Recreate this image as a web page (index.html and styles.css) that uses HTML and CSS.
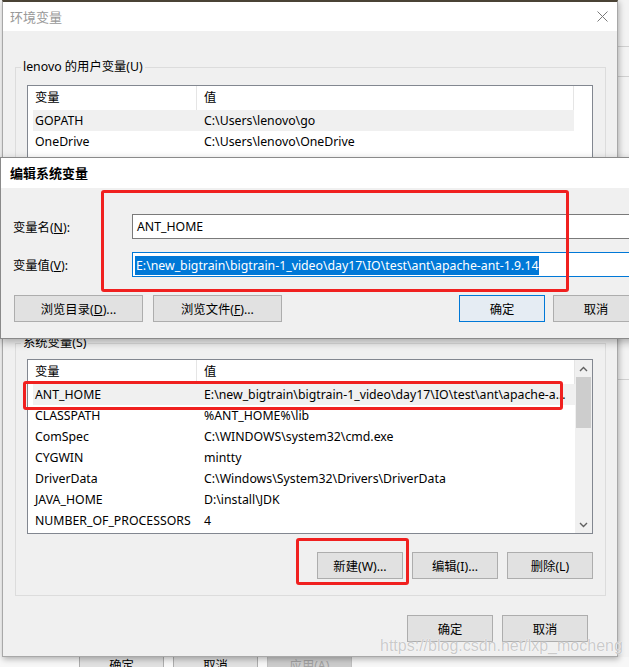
FILE: index.html
```html
<!DOCTYPE html>
<html lang="zh-CN">
  <head>
    <meta charset="UTF-8" />
    <title>环境变量</title>
    <link rel="stylesheet" href="styles.css">
  </head>
  <body>
    <div class="screen">
      <div class="top_row">
        <div class="env_dialog">
          <div class="env_title">
            <span>环境变量</span>
            <svg class="close_icon" width="11" height="11" viewBox="0 0 11 11">
              <path d="M0.5 0.5 L10.5 10.5 M10.5 0.5 L0.5 10.5" stroke="#7a7a7a" stroke-width="1" fill="none" />
            </svg>
          </div>
          <div class="env_body">
            <fieldset class="group group_user">
              <legend>lenovo 的用户变量(U)</legend>
              <div class="list list_user">
                <div class="list_body">
                  <div class="list_head">
                    <span class="col_name">变量</span>
                    <span class="col_value">值</span>
                  </div>
                  <div class="row selected">
                    <span class="col_name">GOPATH</span>
                    <span class="col_value">C:\Users\lenovo\go</span>
                  </div>
                  <div class="row">
                    <span class="col_name">OneDrive</span>
                    <span class="col_value">C:\Users\lenovo\OneDrive</span>
                  </div>
                </div>
                <div class="scroll_blank"></div>
              </div>
              <div class="group_buttons">
                <button class="btn">新建(N)...</button>
                <button class="btn">编辑(E)...</button>
                <button class="btn">删除(D)</button>
              </div>
            </fieldset>

            <fieldset class="group group_system">
              <legend>系统变量(S)</legend>
              <div class="list list_system">
                <div class="list_body">
                  <div class="list_head">
                    <span class="col_name">变量</span>
                    <span class="col_value">值</span>
                  </div>
                  <div class="row selected">
                    <span class="col_name">ANT_HOME</span>
                    <span class="col_value">E:\new_bigtrain\bigtrain-1_video\day17\IO\test\ant\apache-a...</span>
                  </div>
                  <div class="row">
                    <span class="col_name">CLASSPATH</span>
                    <span class="col_value">%ANT_HOME%\lib</span>
                  </div>
                  <div class="row">
                    <span class="col_name">ComSpec</span>
                    <span class="col_value">C:\WINDOWS\system32\cmd.exe</span>
                  </div>
                  <div class="row">
                    <span class="col_name">CYGWIN</span>
                    <span class="col_value">mintty</span>
                  </div>
                  <div class="row">
                    <span class="col_name">DriverData</span>
                    <span class="col_value">C:\Windows\System32\Drivers\DriverData</span>
                  </div>
                  <div class="row">
                    <span class="col_name">JAVA_HOME</span>
                    <span class="col_value">D:\install\JDK</span>
                  </div>
                  <div class="row">
                    <span class="col_name">NUMBER_OF_PROCESSORS</span>
                    <span class="col_value">4</span>
                  </div>
                </div>
                <div class="scrollbar">
                  <div class="scroll_arrow">
                    <svg width="9" height="6" viewBox="0 0 9 6"><path d="M1 5 L4.5 1.5 L8 5" stroke="#606060" stroke-width="1.4" fill="none" /></svg>
                  </div>
                  <div class="scroll_track">
                    <div class="scroll_thumb"></div>
                  </div>
                  <div class="scroll_arrow">
                    <svg width="9" height="6" viewBox="0 0 9 6"><path d="M1 1 L4.5 4.5 L8 1" stroke="#606060" stroke-width="1.4" fill="none" /></svg>
                  </div>
                </div>
              </div>
              <div class="group_buttons">
                <button class="btn">新建(W)...</button>
                <button class="btn">编辑(I)...</button>
                <button class="btn">删除(L)</button>
              </div>
            </fieldset>

            <div class="footer_buttons">
              <button class="btn">确定</button>
              <button class="btn">取消</button>
            </div>
          </div>
        </div>
        <div class="behind_right">
          <div class="strip_line line_a"></div>
          <div class="strip_line line_b"></div>
          <div class="strip_line line_c"></div>
        </div>
      </div>

      <div class="behind_bottom">
        <button class="btn">确定</button>
        <button class="btn">取消</button>
        <button class="btn disabled">应用(A)</button>
      </div>

      <!-- 编辑系统变量 (弹窗) -->
      <div class="edit_dialog">
        <div class="edit_title">编辑系统变量</div>
        <div class="edit_body">
          <div class="field_row">
            <label class="field_label">变量名(<u>N</u>):</label>
            <div class="field_input">ANT_HOME</div>
          </div>
          <div class="field_row">
            <label class="field_label">变量值(<u>V</u>):</label>
            <div class="field_input focused"><span class="selection">E:\new_bigtrain\bigtrain-1_video\day17\IO\test\ant\apache-ant-1.9.14</span></div>
          </div>
          <div class="edit_buttons">
            <button class="btn wide">浏览目录(<u>D</u>)...</button>
            <button class="btn wide">浏览文件(<u>F</u>)...</button>
            <button class="btn default">确定</button>
            <button class="btn">取消</button>
          </div>
        </div>
      </div>

      <!-- 红框标注 -->
      <div class="mark mark_edit"></div>
      <div class="mark mark_row"></div>
      <div class="mark mark_new"></div>

      <div class="watermark">https://blog.csdn.net/lxp_mocheng</div>
    </div>
  </body>
</html>
```

FILE: styles.css
```css
* {
  box-sizing: border-box;
}
body {
  margin: 0;
  font-family: "Noto Sans", "Noto Sans CJK SC", sans-serif;
  font-size: 12.3px;
  color: #000;
}
.screen {
  position: relative;
  width: 629px;
  height: 667px;
  overflow: hidden;
  background: #f7f7f7;
}
.top_row {
  display: flex;
}

/* 环境变量 窗口 */
.env_dialog {
  position: relative;
  z-index: 1;
  width: 616px;
  height: 657px;
  margin-left: 2px;
  border-top: 2px solid #4a4335;
  border-left: 1px solid #a8a8a8;
  border-right: 1px solid #a8a8a8;
  border-bottom: 1px solid #a8a8a8;
  background: #f0f0f0;
  box-shadow: 1px 2px 6px rgba(0, 0, 0, 0.3);
  display: flex;
  flex-direction: column;
}
.env_title {
  height: 29px;
  background: #fff;
  color: #999;
  font-size: 13px;
  display: flex;
  align-items: center;
  justify-content: space-between;
  padding: 0 9px 0 7px;
}
.group {
  margin: 28px 11px 0 12px;
  padding: 0 12px 16px 11px;
  border: 1px solid #dcdcdc;
  min-width: 0;
}
.group legend {
  margin-left: -6px;
  padding: 0 2px;
  line-height: 16px;
}
.group_system {
  margin-top: 24px;
}
.list {
  margin-top: 10px;
  display: flex;
  background: #fff;
  border: 1px solid #828790;
}
.list_user {
  height: 164px;
}
.list_system {
  height: 175px;
  margin-top: 8px;
}
.list_body {
  flex: 1;
  overflow: hidden;
}
.list_head {
  display: flex;
  height: 24px;
  line-height: 24px;
}
.list_head span {
  padding-left: 7px;
  border-right: 1px solid #e5e5e5;
}
.list_head .col_name {
  width: 169px;
}
.list_head .col_value {
  flex: 1;
}
.row {
  display: flex;
  height: 21px;
  line-height: 21px;
  margin-left: 5px;
  white-space: nowrap;
}
.row .col_name {
  width: 164px;
  padding-left: 2px;
  flex-shrink: 0;
}
.row .col_value {
  padding-left: 7px;
}
.row.selected {
  background: #f0f0f0;
}
.scroll_blank {
  width: 18px;
}
.scrollbar {
  width: 17px;
  background: #f0f0f0;
  display: flex;
  flex-direction: column;
}
.scroll_arrow {
  height: 17px;
  display: flex;
  align-items: center;
  justify-content: center;
}
.scroll_track {
  flex: 1;
}
.scroll_thumb {
  height: 51px;
  margin: 0 1px;
  background: #cdcdcd;
}
.group_buttons {
  margin-top: 18px;
  display: flex;
  justify-content: flex-end;
  gap: 9px;
}
.btn {
  width: 86px;
  height: 27px;
  padding: 0;
  border: 1px solid #adadad;
  background: #e1e1e1;
  font: inherit;
  color: #000;
}
.footer_buttons {
  margin: 19px 29px 0 0;
  display: flex;
  justify-content: flex-end;
  gap: 9px;
}

/* 背后的窗口 */
.behind_right {
  flex: 1;
  height: 657px;
  background: #f3f3f3;
}
.strip_line {
  height: 1px;
  background: #d0d0d0;
}
.line_a {
  margin-top: 46px;
}
.line_b {
  margin-top: 29px;
}
.line_c {
  margin-top: 302px;
}
.behind_bottom {
  margin-top: -6px;
  padding-left: 79px;
  display: flex;
  gap: 9px;
}
.behind_bottom .btn {
  width: 85px;
}
.behind_bottom .disabled {
  background: #cccccc;
  border-color: #bfbfbf;
  color: #a0a0a0;
}

/* 编辑系统变量 */
.edit_dialog {
  position: absolute;
  z-index: 2;
  left: 0;
  top: 157px;
  width: 660px;
  height: 182px;
  border: 1px solid #8a8a8a;
  background: #f0f0f0;
  box-shadow: 0 3px 8px rgba(0, 0, 0, 0.3);
}
.edit_title {
  height: 30px;
  line-height: 30px;
  padding-left: 9px;
  background: #fff;
  font-size: 13px;
  font-weight: bold;
}
.edit_body {
  padding: 26px 0 0 12px;
}
.field_row {
  display: flex;
  align-items: center;
}
.field_row + .field_row {
  margin-top: 13px;
}
.field_label {
  width: 119px;
}
.field_input {
  width: 520px;
  height: 25px;
  line-height: 23px;
  padding-left: 4px;
  background: #fff;
  border: 1px solid #7a7a7a;
  white-space: nowrap;
}
.field_input.focused {
  border-color: #0078d7;
  padding-left: 2px;
}
.selection {
  display: inline-block;
  line-height: 19px;
  padding: 0 1px;
  background: #0078d7;
  color: #fff;
  vertical-align: middle;
}
.edit_buttons {
  margin: 18px 0 0 1px;
  display: flex;
}
.edit_buttons .wide {
  width: 129px;
}
.edit_buttons .wide + .wide {
  margin-left: 10px;
}
.edit_buttons .default {
  margin-left: 177px;
  border-color: #0078d7;
  background: #e5ecf3;
}
.edit_buttons .default + .btn {
  margin-left: 8px;
}

/* 红框 */
.mark {
  position: absolute;
  z-index: 3;
  border: 3px solid #f0201f;
  border-radius: 3px;
}
.mark_edit {
  left: 101px;
  top: 190px;
  width: 468px;
  height: 102px;
}
.mark_row {
  left: 23px;
  top: 381px;
  width: 540px;
  height: 29px;
}
.mark_new {
  left: 296px;
  top: 538px;
  width: 113px;
  height: 47px;
}
.watermark {
  position: absolute;
  z-index: 4;
  left: 380px;
  top: 636px;
  font-family: "Liberation Sans", Arial, sans-serif;
  font-size: 16px;
  line-height: 20px;
  color: rgba(185, 185, 185, 0.75);
  text-shadow: 0 0 1px #fff, 0 0 1px #fff;
}
```
